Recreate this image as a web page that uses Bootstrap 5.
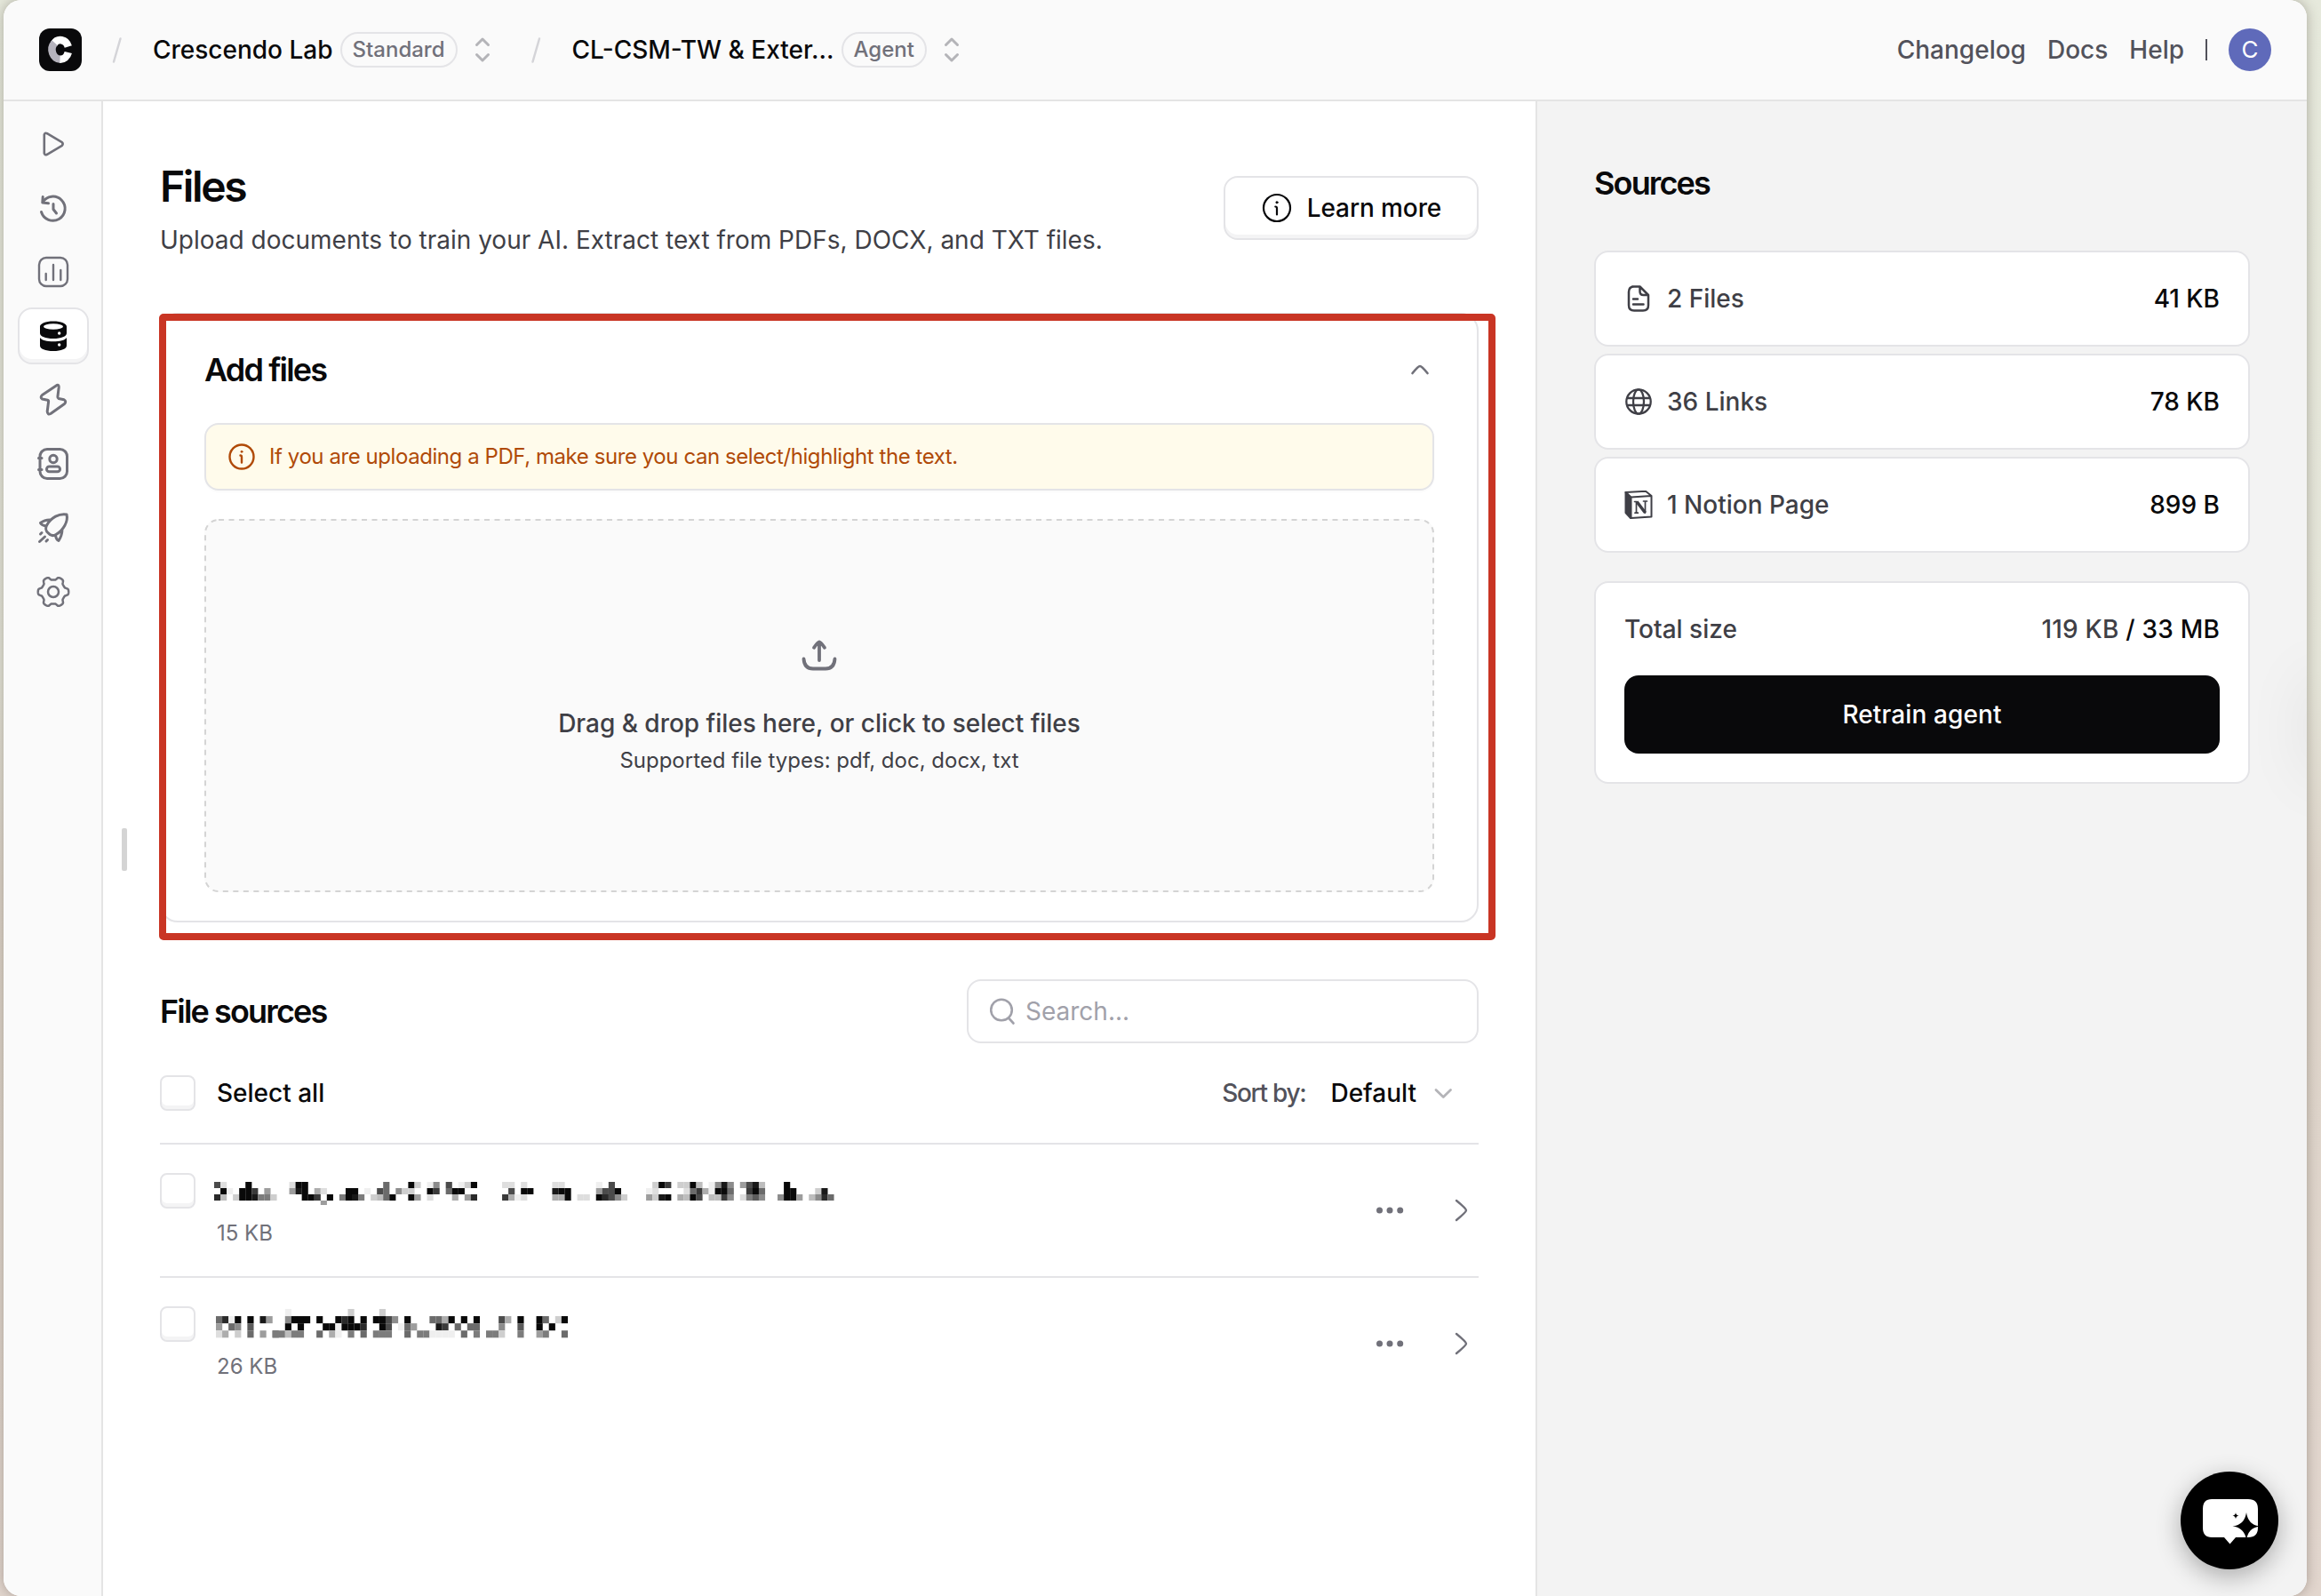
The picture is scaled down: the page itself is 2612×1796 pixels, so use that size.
<!DOCTYPE html>
<html lang="en">
<head>
<meta charset="utf-8">
<meta name="viewport" content="width=device-width, initial-scale=1">
<title>Files</title>
<link href="https://cdn.jsdelivr.net/npm/bootstrap@5.3.0/dist/css/bootstrap.min.css" rel="stylesheet">
<style>
  html, body { height: 100%; }
  body {
    font-family: Inter, "Liberation Sans", sans-serif;
    font-size: 28px; line-height: 40px; font-weight: 500; color: #09090b;
    background: linear-gradient(180deg, #e6e9dc 0%, #e4e4d8 42%, #ddd4c9 55%, #e2d6ce 100%);
    padding: 0 16px 0 4px; overflow: hidden;
  }
  svg { display: block; flex: none; fill: none; stroke: currentColor; stroke-width: 3; stroke-linecap: round; stroke-linejoin: round; }
  .window { height: 1796px; border-radius: 20px; background: #fff; overflow: hidden; box-shadow: 0 0 14px rgba(60,50,40,.35); }
  .topbar { height: 114px; background: #fafafa; border-bottom: 2px solid #e4e4e4; padding: 0 40px; flex: none; }
  .topbar a { color: #52525b; text-decoration: none; }
  .toplinks { gap: 24px; }
  .plan { height: 40px; border: 2px solid #e4e4e7; border-radius: 20px; font-size: 24px; line-height: 36px; color: #71717a; padding: 0 12px; margin-left: 8px; }
  .updown { color: #b4b4b8; margin-left: -1px; }
  .slash { color: #d4d4d8; stroke-width: 2.5; }
  .rail { width: 112px; border-right: 2px solid #e4e4e4; background: #fafafa; padding: 16px 0 0 16px; gap: 8px; color: #71717a; flex: none; }
  .rail a { width: 80px; height: 64px; border-radius: 16px; color: inherit; border: 2px solid transparent; }
  .rail a.current { background: #fff; border-color: #e4e4e7; color: #09090b; box-shadow: inset 0 -4px 0 #f4f4f5; }
  .workspace { width: 1612px; padding: 68px 64px 0; flex: none; }
  .h-lg, .h-md { font-weight: 600; margin: 0; }
  .h-lg { font-size: 48px; line-height: 56px; letter-spacing: -2.4px; }
  .h-md { font-size: 36px; line-height: 44px; letter-spacing: -1.85px; }
  .intro { color: #3f3f46; font-weight: 400; margin: 12px 0 0; }
  .btn-learn { height: 72px; width: 287px; margin-top: 16px; border: 2px solid #e4e4e7; border-radius: 16px; font-size: 28px; font-weight: 500; letter-spacing: -.1px; gap: 17px; box-shadow: inset 0 -4px 0 #f4f4f5; padding: 0 0 0 1px; color: #09090b; }
  .adder { height: 686px; margin-top: 62px; border: 2px solid #e4e4e7; border-radius: 20px; padding: 40px 48px 0; }
  .callout { position: absolute; left: -1px; top: 1px; width: 1504px; height: 705px; border: 8px solid #c93524; border-radius: 5px; pointer-events: none; }
  .notice { height: 76px; margin: 38px 0 32px; border: 2px solid #e4e4e7; border-radius: 16px; background: #fffbeb; color: #b04a08; font-size: 24px; font-weight: 400; letter-spacing: -.43px; padding: 0 24px; gap: 15px; box-shadow: 0 2px 2px rgba(0,0,0,.02); }
  .dropzone { height: 420px; border-radius: 16px; background: #fafafa; color: #3f3f46; }
  .dropzone > svg.outline { position: absolute; inset: 0; width: 100%; height: 100%; }
  .hint { font-size: 24px; font-weight: 400; line-height: 36px; }
  .search { width: 576px; height: 72px; border: 2px solid #e4e4e7; border-radius: 16px; color: #a1a1aa; font-weight: 400; padding: 0 24px; gap: 10px; }
  .listhead { height: 114px; border-bottom: 2px solid #e4e4e7; }
  .tick { width: 40px; height: 40px; flex: none; border: 2px solid #e4e4e7; border-radius: 8px; box-shadow: inset 0 -4px 0 #f4f4f5; background: #fff; }
  .entry { height: 150px; border-bottom: 2px solid #e4e4e7; padding-top: 32px; }
  .entry:last-child { border-bottom: 0; }
  .mosaic { display: block; height: 40px; overflow: visible; }
  .size { font-size: 24px; font-weight: 400; line-height: 36px; color: #71717a; margin: 10px 0 0 4px; }
  .sources { background: #f3f3f3; border-left: 2px solid #e4e4e4; padding: 70px 64px 0; position: relative; }
  .tile { background: #fff; border: 2px solid #e4e4e7; border-radius: 16px; height: 108px; padding: 0 32px; gap: 16px; }
  .soft { color: #3f3f46; }
  .total { background: #fff; border: 2px solid #e4e4e7; border-radius: 16px; height: 228px; padding: 32px 32px 0; margin-top: 32px; }
  .btn-train { background: #09090b; color: #fff; height: 88px; border-radius: 16px; font-size: 28px; font-weight: 500; margin-top: 32px; border: 0; letter-spacing: .1px; }
  .avatar { width: 48px; height: 48px; border-radius: 50%; background: #5f6aba; color: #fff; font-size: 26px; font-weight: 400; }
  .chat { position: absolute; left: 2454px; top: 1656px; width: 110px; height: 110px; border-radius: 50%; background: #000; box-shadow: 0 8px 28px rgba(0,0,0,.3); }
  .grip { position: absolute; left: 137px; top: 932px; width: 6px; height: 48px; border-radius: 2px; background: #d4d4d4; }
  .edgeglow { position: absolute; right: -30px; top: 650px; width: 20px; height: 110px; border-radius: 10px; box-shadow: 0 0 70px 6px rgba(0,0,0,.1); }
</style>
</head>
<body>
<div class="window d-flex flex-column">
  <header class="topbar d-flex align-items-center justify-content-between">
    <div class="d-flex align-items-center">
      <svg width="48" height="48" viewBox="0 0 48 48"><rect width="48" height="48" rx="12" fill="#09090b" stroke="none"/><path d="M32.800 20.500A9.300 10.800 0 0 0 16.500 17.500" stroke="#fff" stroke-width="8.500" stroke-linecap="butt"/><path d="M17.500 16.200A9.600 10.800 0 0 0 24 34.800" stroke="#b5b3bd" stroke-width="8.500" stroke-linecap="butt"/><path d="M23.500 34.800A9.300 10.800 0 0 0 32.800 27" stroke="#fff" stroke-width="8.500" stroke-linecap="butt"/></svg>
      <svg class="slash ms-1" width="76" height="48"><path d="M32 37.500L39.500 11.500"/></svg>
      <span>Crescendo Lab</span>
      <span class="plan">Standard</span>
      <svg class="updown" width="60" height="40"><path d="M22.500 14.500L29 8L35.500 14.500M22.500 25.500L29 32L35.500 25.500"/></svg>
      <svg class="slash" width="70" height="48"><path d="M25.500 37.500L33 11.500"/></svg>
      <span>CL-CSM-TW &amp; Exter…</span>
      <span class="plan">Agent</span>
      <svg class="updown" width="60" height="40"><path d="M22.500 14.500L29 8L35.500 14.500M22.500 25.500L29 32L35.500 25.500"/></svg>
    </div>
    <nav class="toplinks d-flex align-items-center">
      <a href="#">Changelog</a><a href="#">Docs</a><a href="#">Help</a>
      <svg width="2" height="24" style="color:#52525b"><path d="M1 0V24" stroke-linecap="butt"/></svg>
      <span class="avatar d-flex align-items-center justify-content-center">C</span>
    </nav>
  </header>

  <div class="d-flex flex-grow-1">
    <aside class="rail d-flex flex-column">
      <a href="#" class="d-flex align-items-center justify-content-center"><svg width="40" height="40"><path d="M9.800 9.500V30.500Q10.300 33 13 31.800L29.800 21.800Q31.500 20 29.800 18.200L13 8.200Q10.300 7 9.800 9.500Z" stroke-width="2.600"/></svg></a>
      <a href="#" class="d-flex align-items-center justify-content-center"><svg width="40" height="40"><path d="M8 13.500A13.600 13.600 0 1 1 6.500 24.500M8.200 7.500L7.800 14L14.500 14.800M20 15.500V21.500L23.500 26"/></svg></a>
      <a href="#" class="d-flex align-items-center justify-content-center"><svg width="40" height="40"><rect x="4" y="4" width="32" height="32" rx="8" stroke-width="2.400"/><path d="M11.700 22V29M20 12V29M28.300 18V29" stroke-width="2.400"/></svg></a>
      <a href="#" class="current d-flex align-items-center justify-content-center"><svg width="40" height="40" stroke="none"><path d="M5 9.500V17C5 20.500 11 23 20 23S35 20.500 35 17V9.500C35 6 29 3.400 20 3.400S5 6 5 9.500ZM5 22V31C5 34.500 11 37 20 37S35 34.500 35 31V22C33 25 27 26.300 20 26.300S7 25 5 22Z" fill="#09090b" stroke="none"/><ellipse cx="20" cy="9.500" rx="11" ry="3.200" fill="#fff" stroke="none"/><circle cx="26.700" cy="17" r="1.700" fill="#fff" stroke="none"/><circle cx="26.700" cy="30" r="1.700" fill="#fff" stroke="none"/></svg></a>
      <a href="#" class="d-flex align-items-center justify-content-center"><svg width="40" height="40"><path d="M24 3.500L7.500 14.500Q4.800 17.300 7.500 19L13.500 20.200Q14.800 20.600 14.600 22L13.200 33Q13.500 37.200 17 35.500L32.500 24.500Q35.200 21.500 32 19.800L26 18.500Q24.700 18 24.900 16.500L26.200 6Q26.500 2.700 24 3.500Z"/></svg></a>
      <a href="#" class="d-flex align-items-center justify-content-center"><svg width="40" height="40"><rect x="5" y="3.500" width="30.500" height="33" rx="8"/><circle cx="20" cy="14.500" r="4.200"/><rect x="12.500" y="23" width="15" height="5.800" rx="2.900"/><path d="M3.500 13.500H7M3.500 26.500H7"/></svg></a>
      <a href="#" class="d-flex align-items-center justify-content-center"><svg width="40" height="40"><path d="M35 5C37 12.500 31.500 22.500 23 27.500C19.500 29.500 16.500 28.500 14.500 26C11 23.500 11 19.500 13 16.500C17.500 8.500 26.500 3.500 35 5ZM17.500 11Q10.500 10.500 5.500 14.500Q6.500 17 12 18M22.500 28Q23 33 26 34.500Q29.500 29.500 30 22.500M7 25.500L5.500 27M10.500 30L4.500 35.500M13.500 33.500L12 35"/></svg></a>
      <a href="#" class="d-flex align-items-center justify-content-center"><svg width="40" height="40"><circle cx="20" cy="20" r="6" stroke-width="2.500"/><path id="gear" stroke-width="2.500"/></svg></a>
    </aside>

    <main class="workspace">
      <div class="d-flex justify-content-between align-items-start">
        <div>
          <h1 class="h-lg">Files</h1>
          <p class="intro">Upload documents to train your AI. Extract text from PDFs, DOCX, and TXT files.</p>
        </div>
        <button class="btn btn-learn d-flex align-items-center justify-content-center"><svg width="34" height="34" style="stroke-width:2.200"><circle cx="17" cy="17" r="15"/><path d="M15.300 15.500Q17 15.500 17 17.500V24.500"/><circle cx="17" cy="10.800" r="1.100" fill="currentColor" stroke-width="1"/></svg>Learn more</button>
      </div>

      <div class="position-relative">
        <section class="adder">
          <div class="d-flex justify-content-between align-items-center">
            <h2 class="h-md">Add files</h2>
            <svg width="32" height="40" style="color:#71717a;stroke-width:2.600"><path d="M7.500 24Q14 16 16 16T24.500 24"/></svg>
          </div>
          <div class="notice d-flex align-items-center"><svg width="32" height="32" style="stroke-width:2.400"><circle cx="16" cy="16" r="13.500"/><path d="M14.500 14.500Q16 14.500 16 16.500V22.500"/><circle cx="16" cy="10.300" r="1" fill="currentColor" stroke-width="1"/></svg>If you are uploading a PDF, make sure you can select/highlight the text.</div>
          <div class="dropzone position-relative d-flex flex-column align-items-center">
            <svg class="outline" viewBox="0 0 1384 420"><rect x="1" y="1" width="1382" height="418" rx="15" stroke="#d4d4d4" stroke-width="2" stroke-dasharray="6 5.500" stroke-linecap="butt"/></svg>
            <svg width="44" height="44" style="color:#71717a;stroke-width:3.800;margin-top:132px"><path d="M4.500 25.500C5 33 8.500 36.500 15 36.500H29C35.500 36.500 39 33 39.500 25.500M22 27V6.500M16 12.800Q20.500 6.500 22 6.500T28 12.800"/></svg>
            <div style="margin-top:34px;letter-spacing:-.030px">Drag &amp; drop files here, or click to select files</div>
            <div class="hint" style="margin-top:4px">Supported file types: pdf, doc, docx, txt</div>
          </div>
        </section>
        <div class="callout"></div>
      </div>

      <div class="d-flex justify-content-between align-items-center" style="margin-top:64px">
        <h2 class="h-md">File sources</h2>
        <div class="search d-flex align-items-center"><svg width="30" height="32" style="stroke-width:2.600"><circle cx="13" cy="14.500" r="11.800"/><path d="M21 23.500L26.500 29.500"/></svg>Search...</div>
      </div>

      <div class="listhead d-flex align-items-center justify-content-between">
        <div class="d-flex align-items-center"><span class="tick"></span><span style="margin-left:24px">Select all</span></div>
        <div class="d-flex align-items-center"><span style="color:#52525b;letter-spacing:-1.300px">Sort by:</span><span style="margin-left:28px">Default</span><svg width="40" height="40" style="color:#b4b4b8;stroke-width:2.800;margin:0 20px 0 10px"><path d="M12 16.500L20.300 24.500L28.500 16.500"/></svg></div>
      </div>
      <div>
        <div class="entry d-flex">
          <span class="tick"></span>
          <div class="flex-grow-1" style="padding-left:20px"><svg class="mosaic" id="m1" width="720" height="40"></svg><p class="size">15 KB</p></div>
          <svg width="120" height="84" style="color:#71717a"><g fill="currentColor" stroke="none"><circle cx="8.500" cy="42" r="3.500"/><circle cx="20" cy="42" r="3.500"/><circle cx="31.700" cy="42" r="3.500"/></g><path d="M95 31Q106 40 106 42T95 53" stroke-width="2.400"/></svg>
        </div>
        <div class="entry d-flex">
          <span class="tick"></span>
          <div class="flex-grow-1" style="padding-left:20px"><svg class="mosaic" id="m2" width="720" height="40"></svg><p class="size">26 KB</p></div>
          <svg width="120" height="84" style="color:#71717a"><g fill="currentColor" stroke="none"><circle cx="8.500" cy="42" r="3.500"/><circle cx="20" cy="42" r="3.500"/><circle cx="31.700" cy="42" r="3.500"/></g><path d="M95 31Q106 40 106 42T95 53" stroke-width="2.400"/></svg>
        </div>
      </div>
    </main>

    <aside class="sources flex-grow-1">
      <h2 class="h-md">Sources</h2>
      <div class="d-flex flex-column gap-2" style="margin-top:54px">
        <div class="tile d-flex align-items-center"><svg width="32" height="32" class="soft" style="stroke-width:2.500"><path d="M9 2.500H17.500L27 12V23.500Q27 29.500 21 29.500H11Q5 29.500 5 23.500V8.500Q5 2.500 11 2.500M17.500 3V8Q17.500 12 21.500 12H26.500M10 16.500H15M10 22.500H21.500"/></svg><span class="soft flex-grow-1">2 Files</span><span>41 KB</span></div>
        <div class="tile d-flex align-items-center"><svg width="32" height="32" class="soft" style="stroke-width:2.300"><circle cx="16" cy="16" r="13.700"/><ellipse cx="16" cy="16" rx="6" ry="13.700"/><path d="M3.500 12H28.500M3.500 20H28.500"/></svg><span class="soft flex-grow-1">36 Links</span><span>78 KB</span></div>
        <div class="tile d-flex align-items-center"><svg width="32" height="32" class="soft" style="stroke-width:2"><path d="M1.500 2L7 7.500V31L1.500 25Z" fill="currentColor"/><path d="M1.500 2L24 .800L30.500 6V29.500L7.500 31V7.500L30.500 6M7.500 7.500L1.500 2"/><path d="M13.500 25V12.500L23.500 25V12M12 25.200H15.300M11.500 12.500H14M21.500 12H25.500" stroke-width="1.700"/><path d="M14 12.500L23.500 25" stroke-width="3.500" stroke-linecap="butt"/></svg><span class="soft flex-grow-1">1 Notion Page</span><span>899 B</span></div>
      </div>
      <div class="total">
        <div class="d-flex justify-content-between"><span class="soft">Total size</span><span style="letter-spacing:.200px"><span class="soft">119 KB</span> / 33 MB</span></div>
        <button class="btn btn-train w-100">Retrain agent</button>
      </div>
      <div class="edgeglow"></div>
    </aside>
  </div>
</div>
<div class="grip"></div>
<button class="btn chat border-0 p-0" aria-label="Open chat"><svg width="110" height="110" stroke="none" style="stroke:none"><path d="M35 31H76Q87 31 87 42V63Q87 74 76 74H62L55.500 81.500L49 74H35Q25 74 25 63V42Q25 31 35 31Z" fill="#fff"/><path d="M74 46Q76 60 89 61.500Q76 63 74 77Q72 63 58.500 61.500Q72 60 74 46ZM62 46Q62.300 49.300 65.500 49.700Q62.300 50.100 62 53.300Q61.700 50.100 58.500 49.700Q61.700 49.300 62 46Z" fill="#000"/></svg></button>

<script src="https://cdn.jsdelivr.net/npm/bootstrap@5.3.0/dist/js/bootstrap.bundle.min.js"></script>
<script>
  // Redacted file names: each entry is [row, first column, hex darkness per cell].
  const names = {
    m1: { x: 1, y: 10, w: 7.045, h: 7, cells: [
      [0,0,'b2'],[0,5,'f'],[0,12,'2ff'],[0,27,'9'],[0,31,'f3'],[0,34,'17'],[0,37,'b013f'],[0,46,'22'],[0,49,'2'],[0,54,'22'],[0,61,'10b'],[0,70,'3fc'],[0,74,'33f4'],[0,79,'17e7'],[0,84,'6be4'],[0,91,'f'],
      [1,1,'f1'],[1,4,'0fc06'],[1,12,'6ef052'],[1,21,'ff01'],[1,26,'b9073'],[1,31,'300fc'],[1,37,'9ff'],[1,47,'b0ff'],[1,54,'eff'],[1,61,'6bbf'],[1,69,'12'],[1,75,'29c51ff9'],[1,85,'cf9'],[1,91,'ff'],[1,96,'3e'],
      [1,4,'f'],[2,0,'d4'],[2,3,'3ffe883'],[2,14,'ffc0f'],[2,20,'8fe8'],[2,25,'349f'],[2,31,'f6'],[2,34,'2'],[2,38,'506d'],[2,46,'c512'],[2,54,'55f'],[2,58,'22'],[2,61,'fdb73'],[2,69,'63ef'],[2,74,'54fb'],[2,79,'44c7'],[2,84,'28a7'],[2,90,'7ff6'],[2,95,'47d9'],[3,17,'6']] },
    m2: { x: 3, y: 3, w: 7.07, h: 8.08, cells: [
      [0,11,'1'],[0,21,'3'],[0,26,'3'],
      [1,0,'9d1f0f0e6'],[1,11,'7fff0f'],[1,19,'fdf0f0ffb7'],[1,30,'f'],[1,34,'995f0f0f'],[1,45,'b5'],[1,48,'f'],[1,51,'f9'],[1,54,'3f'],
      [2,0,'6097'],[2,5,'a'],[2,11,'f0f'],[2,17,'ff1fffd'],[2,26,'fb0196'],[2,35,'ec09099'],[2,45,'7'],[2,48,'a'],[2,51,'f0f'],
      [3,0,'2503090609'],[3,9,'884880'],[3,16,'9051'],[3,21,'8090888'],[3,30,'90881111'],[3,39,'908'],[3,43,'883'],[3,48,'8'],[3,51,'68009']] }
  };
  const NS = 'http://www.w3.org/2000/svg';
  for (const [id, m] of Object.entries(names)) {
    for (const [row, col, run] of m.cells) {
      [...run].forEach((d, i) => {
        const v = parseInt(d, 16);
        if (!v) return;
        const r = document.createElementNS(NS, 'rect');
        const g = Math.round(255 - v * 16.4);
        r.setAttribute('x', m.x + (col + i) * m.w);
        r.setAttribute('y', m.y + row * m.h);
        r.setAttribute('width', m.w + .1);
        r.setAttribute('height', id === 'm1' && row === 3 ? 5 : m.h);
        r.setAttribute('fill', `rgb(${g},${g},${g})`);
        r.setAttribute('stroke', 'none');
        document.getElementById(id).appendChild(r);
      });
    }
  }
  // Six-lobed gear outline.
  let d = '';
  for (let a = 0; a < 360; a += 3) {
    const t = a * Math.PI / 180, c = Math.cos(6 * t);
    const r = 15.3 + 1.9 * Math.tanh(2.2 * c) / Math.tanh(2.2);
    d += (a ? 'L' : 'M') + (20 + r * Math.cos(t)).toFixed(2) + ' ' + (20 + r * Math.sin(t)).toFixed(2);
  }
  document.getElementById('gear').setAttribute('d', d + 'Z');
</script>
</body>
</html>
